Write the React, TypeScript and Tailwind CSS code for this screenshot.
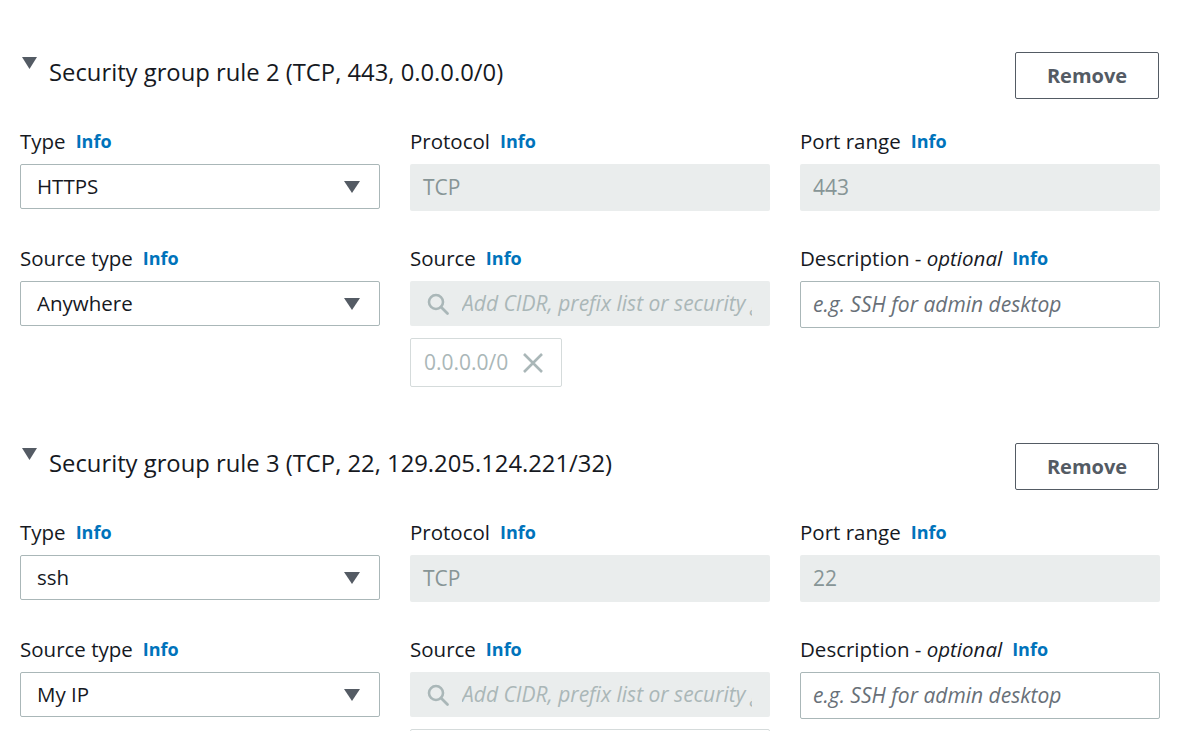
import React from 'react'

const font = { fontFamily: '"Open Sans", "Noto Sans", sans-serif' }

function Caret({ className = '' }) {
  return (
    <svg width="16" height="12" viewBox="0 0 16 12" className={className}>
      <path d="M0 0 H16 L8 12 Z" fill="#545b64" />
    </svg>
  )
}

function Label({ text, optional }: { text: string; optional?: boolean }) {
  return (
    <div className="mb-[11px] flex h-6 items-center text-[20.5px] leading-6 text-[#16191f]">
      <span>
        {text}
        {optional && <> - <i>optional</i></>}
      </span>
      <a className="ml-[10px] text-[18px] font-bold text-[#0073bb]">Info</a>
    </div>
  )
}

function Select({ value }: { value: string }) {
  return (
    <div className="flex h-[45px] items-center justify-between rounded-[2px] border border-[#aab7b8] bg-white pl-4 pr-[19px] text-[20.5px] text-[#16191f]">
      <span>{value}</span>
      <Caret />
    </div>
  )
}

function Disabled({ value }: { value: string }) {
  return (
    <div className="flex h-[47px] items-center rounded-[2px] bg-[#eaeded] px-[13px] text-[21px] text-[#879596]">
      {value}
    </div>
  )
}

function SearchBox() {
  return (
    <div className="flex h-[45px] items-center overflow-hidden whitespace-nowrap rounded-[2px] bg-[#eaeded] pl-4 text-[21px] italic text-[#aab7b8]">
      <svg width="24" height="24" viewBox="0 0 24 24" className="mr-[12px] shrink-0">
        <circle cx="10" cy="10" r="7" fill="none" stroke="#aab7b8" strokeWidth="2.6" />
        <path d="M15 15 L21.5 21.5" stroke="#aab7b8" strokeWidth="2.8" strokeLinecap="round" />
      </svg>
      <span className="w-[290px] overflow-hidden">Add CIDR, prefix list or security group</span>
    </div>
  )
}

function TextInput({ placeholder }: { placeholder: string }) {
  return (
    <div className="flex h-[47px] items-center rounded-[2px] border border-[#aab7b8] bg-white px-3 text-[21px] italic text-[#687078]">
      {placeholder}
    </div>
  )
}

function Token({ value }: { value: string }) {
  return (
    <div className="mt-3 flex h-[49px] w-[152px] items-center gap-[14px] rounded-[2px] border border-[#d5dbdb] bg-white pl-[13px] text-[21px] text-[#aab7b8]">
      <span>{value}</span>
      <svg width="22" height="22" viewBox="0 0 22 22">
        <path d="M2 2 L20 20 M20 2 L2 20" stroke="#aab7b8" strokeWidth="2.6" />
      </svg>
    </div>
  )
}

function Rule({ n, summary, type, port, sourceType, token }: any) {
  return (
    <section className="mb-[56px]">
      <div className="flex items-start justify-between">
        <div className="flex items-start pt-[3px]">
          <svg width="15" height="12" viewBox="0 0 15 12" className="ml-[2px] mr-[12px] mt-[2px]">
            <path d="M0 0 H15 L7.5 12 Z" fill="#545b64" />
          </svg>
          <h2 className="text-[23.8px] leading-[34px] text-[#16191f]">Security group rule {n} ({summary})</h2>
        </div>
        <button className="mr-[1px] h-[47px] w-[144px] rounded-[2px] border border-[#545b64] bg-white text-[20px] font-bold text-[#545b64]">
          Remove
        </button>
      </div>
      <div className="mt-[30px] grid grid-cols-3 gap-x-[30px] gap-y-[35px]">
        <div>
          <Label text="Type" />
          <Select value={type} />
        </div>
        <div>
          <Label text="Protocol" />
          <Disabled value="TCP" />
        </div>
        <div>
          <Label text="Port range" />
          <Disabled value={port} />
        </div>
        <div>
          <Label text="Source type" />
          <Select value={sourceType} />
        </div>
        <div>
          <Label text="Source" />
          <SearchBox />
          {token && <Token value={token} />}
          {!token && <div className="mt-3 h-[49px] w-[400px] max-w-full rounded-[2px] border border-[#d5dbdb]" />}
        </div>
        <div>
          <Label text="Description" optional />
          <TextInput placeholder="e.g. SSH for admin desktop" />
        </div>
      </div>
    </section>
  )
}

export default function App() {
  return (
    <div className="h-[731px] overflow-hidden bg-white" style={font}>
      <div className="w-[1160px] pl-5 pt-[52px]">
        <Rule n={2} summary="TCP, 443, 0.0.0.0/0" type="HTTPS" port="443" sourceType="Anywhere" token="0.0.0.0/0" />
        <Rule n={3} summary="TCP, 22, 129.205.124.221/32" type="ssh" port="22" sourceType="My IP" />
      </div>
    </div>
  )
}
